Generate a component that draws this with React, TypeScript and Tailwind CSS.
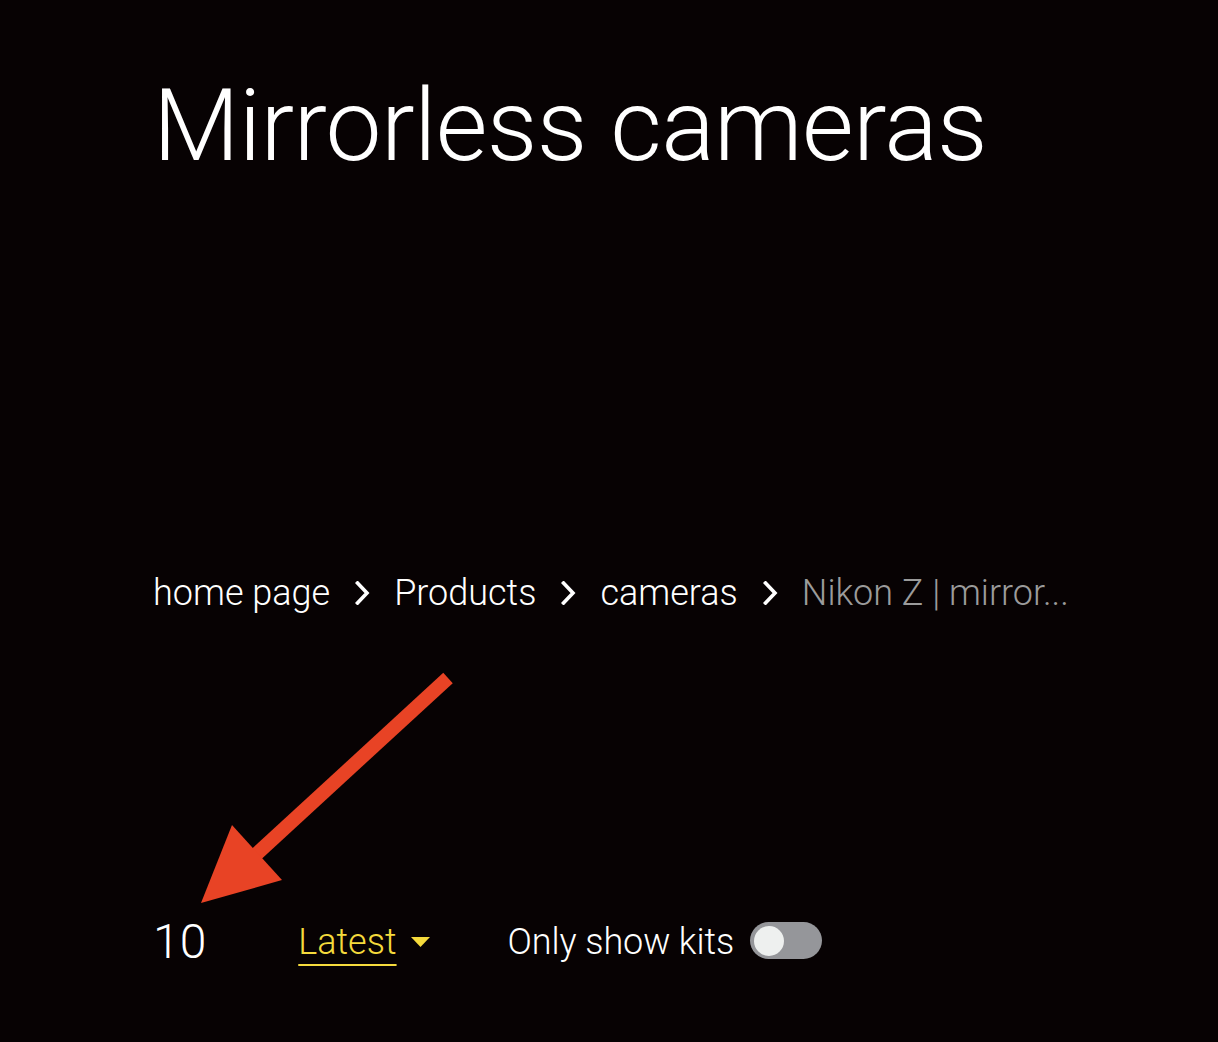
import React from 'react';

const crumbs = ['home page', 'Products', 'cameras'];

function Chevron() {
  return (
    <svg width="15" height="24" viewBox="0 0 15 24" className="ml-[25px] mr-[24px] shrink-0">
      <path d="M2.5 2 L12 12 L2.5 22" fill="none" stroke="#ffffff" strokeWidth="3.6" strokeLinecap="square" />
    </svg>
  );
}

export default function App() {
  return (
    <div
      className="relative min-h-[1042px] w-full bg-[#070203] pl-[153px] pt-[76px] text-white"
      style={{ fontFamily: 'Roboto, "Noto Sans", sans-serif' }}
    >
      {/* title */}
      <h1 className="text-[100px] font-light leading-none tracking-[-0.7px]">Mirrorless cameras</h1>

      {/* breadcrumb */}
      <nav className="mt-[399px] flex items-center text-[36px] font-light leading-none">
        {crumbs.map((c) => (
          <React.Fragment key={c}>
            <span>{c}</span>
            <Chevron />
          </React.Fragment>
        ))}
        <span className="text-[#9b9b9b]">Nikon Z | mirror...</span>
      </nav>

      {/* filter row */}
      <div className="mt-[307px] flex items-center">
        <span className="text-[48px] font-light leading-none">10</span>
        <button className="ml-[92px] flex items-center text-[36px] font-light leading-none text-[#f5da3c]">
          <span className="underline decoration-2 underline-offset-[10px]">Latest</span>
          <svg width="19" height="10" viewBox="0 0 19 10" className="ml-[14px]">
            <path d="M0 0 H19 L9.5 10 Z" fill="#f5da3c" />
          </svg>
        </button>
        <span className="ml-[78px] text-[36px] font-light leading-none tracking-[-0.1px]">Only show kits</span>
        <div className="ml-[16px] -mt-[3px] flex h-[37px] w-[72px] items-center rounded-full bg-[#95969a] px-[4px]">
          <div className="h-[30px] w-[30px] rounded-full bg-[#eef0ef]" />
        </div>
      </div>

      {/* annotation arrow */}
      <svg
        className="pointer-events-none absolute left-[190px] top-[665px]"
        width="275"
        height="250"
        viewBox="190 665 275 250"
      >
        <line x1="448" y1="678" x2="250" y2="860" stroke="#e84325" strokeWidth="14" />
        <polygon points="201,903 232,825 282,880" fill="#e84325" />
      </svg>
    </div>
  );
}
